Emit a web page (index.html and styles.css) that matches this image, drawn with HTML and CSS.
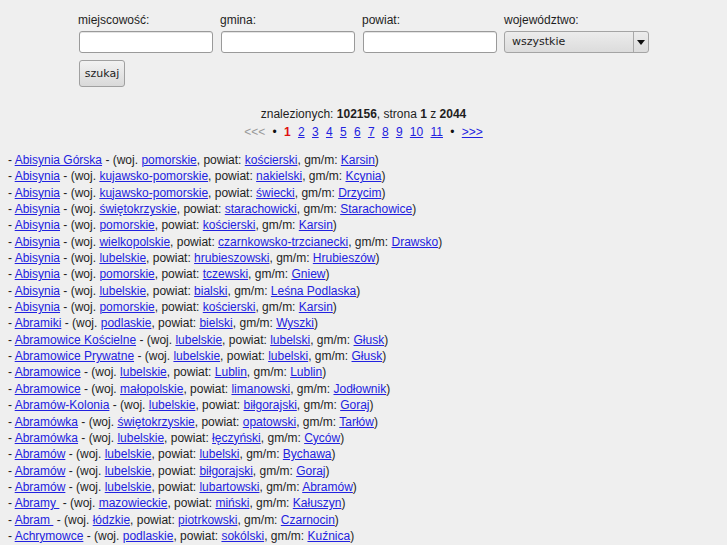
FILE: index.html
```html
<!DOCTYPE html>
<html lang="pl">
<head>
<meta charset="utf-8">
<title>Szukaj miejscowości</title>
<link rel="stylesheet" href="styles.css">
</head>
<body>
<form class="search">
  <div class="fields">
    <div class="field">
      <label class="lbl">miejscowość:</label>
      <input class="txt" type="text">
    </div>
    <div class="field">
      <label class="lbl">gmina:</label>
      <input class="txt" type="text">
    </div>
    <div class="field">
      <label class="lbl">powiat:</label>
      <input class="txt" type="text">
    </div>
    <div class="field">
      <label class="lbl">województwo:</label>
      <div class="select">
        <span class="select-val">wszystkie</span>
        <span class="select-btn"><svg width="8" height="5" viewBox="0 0 8 5"><path d="M0 0H8L4 5Z" fill="#111"/></svg></span>
      </div>
    </div>
  </div>
  <button class="btn" type="button">szukaj</button>
</form>

<div class="summary">znalezionych: <b>102156</b>, strona <b>1</b> z <b>2044</b></div>
<div class="pager">
  <span class="off">&lt;&lt;&lt;</span>
  <span class="dot">•</span>
  <span class="cur">1</span>
  <a href="#">2</a><a href="#">3</a><a href="#">4</a><a href="#">5</a><a href="#">6</a><a href="#">7</a><a href="#">8</a><a href="#">9</a><a href="#">10</a><a href="#">11</a>
  <span class="dot">•</span>
  <a href="#">&gt;&gt;&gt;</a>
</div>

<div class="results">
<div>- <a href="#">Abisynia Górska</a> - (woj. <a href="#">pomorskie</a>, powiat: <a href="#">kościerski</a>, gm/m: <a href="#">Karsin</a>)</div>
<div>- <a href="#">Abisynia</a> - (woj. <a href="#">kujawsko-pomorskie</a>, powiat: <a href="#">nakielski</a>, gm/m: <a href="#">Kcynia</a>)</div>
<div>- <a href="#">Abisynia</a> - (woj. <a href="#">kujawsko-pomorskie</a>, powiat: <a href="#">świecki</a>, gm/m: <a href="#">Drzycim</a>)</div>
<div>- <a href="#">Abisynia</a> - (woj. <a href="#">świętokrzyskie</a>, powiat: <a href="#">starachowicki</a>, gm/m: <a href="#">Starachowice</a>)</div>
<div>- <a href="#">Abisynia</a> - (woj. <a href="#">pomorskie</a>, powiat: <a href="#">kościerski</a>, gm/m: <a href="#">Karsin</a>)</div>
<div>- <a href="#">Abisynia</a> - (woj. <a href="#">wielkopolskie</a>, powiat: <a href="#">czarnkowsko-trzcianecki</a>, gm/m: <a href="#">Drawsko</a>)</div>
<div>- <a href="#">Abisynia</a> - (woj. <a href="#">lubelskie</a>, powiat: <a href="#">hrubieszowski</a>, gm/m: <a href="#">Hrubieszów</a>)</div>
<div>- <a href="#">Abisynia</a> - (woj. <a href="#">pomorskie</a>, powiat: <a href="#">tczewski</a>, gm/m: <a href="#">Gniew</a>)</div>
<div>- <a href="#">Abisynia</a> - (woj. <a href="#">lubelskie</a>, powiat: <a href="#">bialski</a>, gm/m: <a href="#">Leśna Podlaska</a>)</div>
<div>- <a href="#">Abisynia</a> - (woj. <a href="#">pomorskie</a>, powiat: <a href="#">kościerski</a>, gm/m: <a href="#">Karsin</a>)</div>
<div>- <a href="#">Abramiki</a> - (woj. <a href="#">podlaskie</a>, powiat: <a href="#">bielski</a>, gm/m: <a href="#">Wyszki</a>)</div>
<div>- <a href="#">Abramowice Kościelne</a> - (woj. <a href="#">lubelskie</a>, powiat: <a href="#">lubelski</a>, gm/m: <a href="#">Głusk</a>)</div>
<div>- <a href="#">Abramowice Prywatne</a> - (woj. <a href="#">lubelskie</a>, powiat: <a href="#">lubelski</a>, gm/m: <a href="#">Głusk</a>)</div>
<div>- <a href="#">Abramowice</a> - (woj. <a href="#">lubelskie</a>, powiat: <a href="#">Lublin</a>, gm/m: <a href="#">Lublin</a>)</div>
<div>- <a href="#">Abramowice</a> - (woj. <a href="#">małopolskie</a>, powiat: <a href="#">limanowski</a>, gm/m: <a href="#">Jodłownik</a>)</div>
<div>- <a href="#">Abramów-Kolonia</a> - (woj. <a href="#">lubelskie</a>, powiat: <a href="#">biłgorajski</a>, gm/m: <a href="#">Goraj</a>)</div>
<div>- <a href="#">Abramówka</a> - (woj. <a href="#">świętokrzyskie</a>, powiat: <a href="#">opatowski</a>, gm/m: <a href="#">Tarłów</a>)</div>
<div>- <a href="#">Abramówka</a> - (woj. <a href="#">lubelskie</a>, powiat: <a href="#">łęczyński</a>, gm/m: <a href="#">Cyców</a>)</div>
<div>- <a href="#">Abramów</a> - (woj. <a href="#">lubelskie</a>, powiat: <a href="#">lubelski</a>, gm/m: <a href="#">Bychawa</a>)</div>
<div>- <a href="#">Abramów</a> - (woj. <a href="#">lubelskie</a>, powiat: <a href="#">biłgorajski</a>, gm/m: <a href="#">Goraj</a>)</div>
<div>- <a href="#">Abramów</a> - (woj. <a href="#">lubelskie</a>, powiat: <a href="#">lubartowski</a>, gm/m: <a href="#">Abramów</a>)</div>
<div>- <a href="#">Abramy&nbsp;</a> - (woj. <a href="#">mazowieckie</a>, powiat: <a href="#">miński</a>, gm/m: <a href="#">Kałuszyn</a>)</div>
<div>- <a href="#">Abram&nbsp;</a> - (woj. <a href="#">łódzkie</a>, powiat: <a href="#">piotrkowski</a>, gm/m: <a href="#">Czarnocin</a>)</div>
<div>- <a href="#">Achrymowce</a> - (woj. <a href="#">podlaskie</a>, powiat: <a href="#">sokólski</a>, gm/m: <a href="#">Kuźnica</a>)</div>
</div>
</body>
</html>
```

FILE: styles.css
```css
html, body {
  margin: 0;
  padding: 0;
}
body {
  background: #efefef;
  color: #1e1e1e;
  font-family: "Liberation Sans", Arial, sans-serif;
  font-size: 12px;
}
a {
  color: #2222e0;
  text-decoration: underline;
}

.search {
  padding: 13px 0 0 78px;
}
.fields {
  display: flex;
}
.field {
  width: 142px;
  display: flex;
  flex-direction: column;
}
.lbl {
  display: block;
  height: 15px;
  line-height: 15px;
  margin-bottom: 3px;
}
.txt {
  box-sizing: border-box;
  margin: 0 0 0 1px;
  width: 134px;
  height: 22px;
  border: 1px solid #9a9a9a;
  border-radius: 3px;
  background: #fff;
  padding: 0 3px;
  font-family: "DejaVu Sans", sans-serif;
  font-size: 11px;
  box-shadow: inset 0 1px 0 #e4e4e4;
}
.select {
  box-sizing: border-box;
  width: 145px;
  height: 22px;
  display: flex;
  border: 1px solid #a4a4a4;
  border-radius: 3px;
  background: linear-gradient(#ececec, #dcdcdc);
  font-family: "DejaVu Sans", sans-serif;
  font-size: 11px;
  color: #222;
}
.select-val {
  flex: 1;
  line-height: 20px;
  padding-left: 7px;
  border-right: 1px solid #a8a8a8;
}
.select-btn {
  width: 14px;
  display: flex;
  align-items: center;
  justify-content: center;
}
.btn {
  display: block;
  margin: 7px 0 0 1px;
  box-sizing: border-box;
  width: 46px;
  height: 27px;
  padding: 0;
  border: 1px solid #a0a0a0;
  border-radius: 3px;
  background: linear-gradient(#f2f2f2, #d9d9d9);
  font-family: "DejaVu Sans", sans-serif;
  font-size: 11px;
  color: #222;
}

.summary {
  margin-top: 19px;
  text-align: center;
  line-height: 16px;
}
.pager {
  display: flex;
  justify-content: center;
  gap: 7.3px;
  line-height: 18px;
  margin-top: 1px;
}
.off { color: #999; }
.cur { color: #e01010; font-weight: bold; }
.dot { color: #111; }

.results {
  margin-top: 11px;
  padding-left: 8px;
  line-height: 16.35px;
}
```
